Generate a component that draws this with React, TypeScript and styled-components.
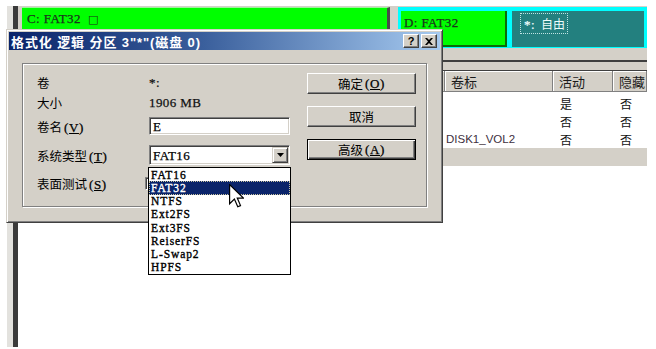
import React from 'react';
import styled, { createGlobalStyle } from 'styled-components';

const CJK = `"Noto Sans CJK SC", "Noto Sans", sans-serif`;
const UI = `"Liberation Sans", "Noto Sans CJK SC", sans-serif`;
const SERIF = `"Liberation Serif", "Noto Sans CJK SC", serif`;

const GlobalStyle = createGlobalStyle`
  html, body {
    margin: 0;
    padding: 0;
    background: #fff;
  }
  body {
    width: 656px;
    height: 349px;
    overflow: hidden;
  }
  * {
    box-sizing: border-box;
  }
`;

// SimSun-like latin: serif, evenly spaced, a bit heavy
const bitmapText = `
  font-family: ${SERIF};
  font-size: 13px;
  line-height: 13px;
  letter-spacing: 0.4px;
  -webkit-text-stroke: 0.25px currentColor;
`;

const Stage = styled.div`
  position: relative;
  width: 656px;
  height: 349px;
  overflow: hidden;
  background: #fff;
`;

/* ---------- partition window behind the dialog ---------- */

const Shell = styled.div`
  display: flex;
  width: 640px;
  height: 341px;
  margin: 6px 0 0 7px;
`;

const Gutter = styled.div`
  width: 6px;
  background: #e3e2de;
`;

const Rail = styled.div`
  width: 5px;
  background: #3b3b3b;
`;

const Main = styled.div`
  flex: 1;
  min-width: 0;
  display: flex;
  flex-direction: column;
`;

const MapStrip = styled.div`
  height: 54px;
  flex: none;
  display: flex;
  align-items: flex-start;
  padding-top: 1px;
  background: #d4d0c8;
`;

const CBox = styled.div`
  width: 368px;
  height: 41px;
  margin-left: 4px;
  padding: 4px 0 0 5px;
  background: #00ff00;
  border-top: 1px solid #9cf59c;
  border-right: 3px solid #4a4a4a;
  ${bitmapText}
  color: #1c321c;
`;

const Square = styled.span`
  margin-left: 7px;
  font: 11px "DejaVu Sans", sans-serif;
  -webkit-text-stroke: 0;
  letter-spacing: 0;
`;

const Selection = styled.div`
  flex: 1;
  height: 41px;
  margin-left: 8px;
  display: flex;
  gap: 5px;
  padding: 4px 3px 1px 3px;
  background: #00ffff;
`;

const DBox = styled.div`
  width: 106px;
  padding: 5px 0 0 3px;
  background: #00ff00;
  border-right: 2px solid #0b6a0b;
  border-bottom: 2px solid #0b6a0b;
  ${bitmapText}
  color: #1c321c;
`;

const FreeBox = styled.div`
  flex: 1;
  padding: 2px 0 0 8px;
  background: #23807f;
`;

const FocusText = styled.span`
  display: inline-block;
  padding: 1px 2px 1px 3px;
  border: 1px dotted #bfe3e3;
  color: #eefcfc;
  ${bitmapText}
`;

const FreeLabel = styled.span`
  margin-left: 6px;
  font: 12px ${CJK};
  letter-spacing: 0;
  -webkit-text-stroke: 0;
`;

const Splitter = styled.div`
  height: 10px;
  flex: none;
  background: #d4d0c8;
  border-top: 2px solid #3f3f3f;
`;

const ListFrame = styled.div`
  flex: 1;
  display: flex;
  flex-direction: column;
  background: #fff;
  border-top: 1px solid #404040;
`;

const COLUMNS = '427px 108px 60px 1fr';

const HeaderRow = styled.div`
  display: grid;
  grid-template-columns: ${COLUMNS};
  height: 21px;
  flex: none;
  background: #d4d0c8;
`;

const HeaderCell = styled.div`
  display: flex;
  align-items: center;
  padding-left: 6px;
  border-right: 1px solid #808080;
  border-bottom: 1px solid #808080;
  box-shadow: inset 1px 1px 0 #fff;
  font: 13px ${CJK};
  color: #1a1a1a;
  white-space: nowrap;
  overflow: hidden;
`;

const Rows = styled.div`
  padding-top: 2px;
`;

const Row = styled.div<{ $muted?: boolean }>`
  display: grid;
  grid-template-columns: ${COLUMNS};
  height: 18px;
  background: ${p => (p.$muted ? '#d4d0c8' : 'transparent')};
`;

const Cell = styled.div<{ $latin?: boolean }>`
  display: flex;
  align-items: center;
  padding-left: ${p => (p.$latin ? '1px' : '7px')};
  font: ${p => (p.$latin ? `11.5px ${UI}` : `12px ${CJK}`)};
  color: ${p => (p.$latin ? '#3e2f40' : '#111')};
  white-space: nowrap;
`;

/* ---------- dialog ---------- */

const Dialog = styled.div`
  position: absolute;
  left: 6px;
  top: 29px;
  width: 437px;
  height: 194px;
  display: flex;
  flex-direction: column;
  padding: 2px;
  background: #d4d0c8;
  border: 1px solid;
  border-color: #d4d0c8 #404040 #404040 #d4d0c8;
  box-shadow: inset 1px 1px 0 #fff, inset -1px -1px 0 #808080;
`;

const TitleBar = styled.div`
  height: 18px;
  flex: none;
  display: flex;
  align-items: center;
  padding: 0 3px 0 2px;
  background: linear-gradient(90deg, #0a246a 0%, #3a5f9c 45%, #a6caf0 100%);
`;

const TitleText = styled.div`
  flex: 1;
  color: #fff;
  font: bold 13px ${UI};
  letter-spacing: 0.9px;
  white-space: nowrap;
`;

const CaptionButton = styled.div`
  width: 16px;
  height: 14px;
  margin-left: 2px;
  display: flex;
  align-items: center;
  justify-content: center;
  background: #d4d0c8;
  border: 1px solid;
  border-color: #fff #404040 #404040 #fff;
  box-shadow: inset -1px -1px 0 #808080;
  font: bold 11px ${UI};
  color: #000;
`;

const DialogBody = styled.div`
  flex: 1;
  padding: 13px;
`;

const GroupBox = styled.div`
  height: 100%;
  display: flex;
  justify-content: space-between;
  padding: 9px 10px 0 14px;
  border: 1px solid #808080;
  box-shadow: inset 1px 1px 0 #fff, 1px 1px 0 #fff;
`;

const Form = styled.div`
  display: flex;
  flex-direction: column;
  padding-top: 1px;
`;

const FieldRow = styled.div<{ $h: number; $gap: number }>`
  display: flex;
  align-items: center;
  height: ${p => p.$h}px;
  margin-top: ${p => p.$gap}px;
`;

const Label = styled.div`
  width: 112px;
  font: 12.5px ${CJK};
  color: #000;
  white-space: nowrap;
`;

const Key = styled.span`
  ${bitmapText}
  letter-spacing: 0.6px;
  margin-left: 2px;
  u {
    text-underline-offset: 1px;
  }
`;

const Value = styled.div`
  ${bitmapText}
  color: #111;
`;

const Sunken = styled.div<{ $h: number }>`
  width: 141px;
  height: ${p => p.$h}px;
  display: flex;
  align-items: center;
  padding-left: 3px;
  background: #fff;
  border: 1px solid;
  border-color: #808080 #fff #fff #808080;
  box-shadow: inset 1px 1px 0 #404040, inset -1px -1px 0 #d4d0c8;
  ${bitmapText}
  color: #000;
`;

const ComboText = styled.span`
  flex: 1;
`;

const ArrowButton = styled.div`
  width: 16px;
  height: 16px;
  margin-right: 1px;
  display: flex;
  align-items: center;
  justify-content: center;
  background: #d4d0c8;
  border: 1px solid;
  border-color: #d4d0c8 #404040 #404040 #d4d0c8;
  box-shadow: inset 1px 1px 0 #fff, inset -1px -1px 0 #808080;
`;

const CheckPeek = styled.div`
  width: 13px;
  height: 13px;
  margin-left: -4px;
  background: #fff;
  border: 1px solid;
  border-color: #808080 #fff #fff #808080;
  box-shadow: inset 1px 1px 0 #404040;
`;

const ButtonColumn = styled.div`
  display: flex;
  flex-direction: column;
  gap: 12px;
`;

const PushButton = styled.div<{ $isDefault?: boolean }>`
  width: 109px;
  height: 21px;
  display: flex;
  align-items: center;
  justify-content: center;
  background: #d4d0c8;
  border: 1px solid;
  border-color: ${p => (p.$isDefault ? '#000' : '#fff #404040 #404040 #fff')};
  box-shadow: ${p =>
    p.$isDefault
      ? 'inset 1px 1px 0 #fff, inset -1px -1px 0 #404040, inset -2px -2px 0 #808080'
      : 'inset -1px -1px 0 #808080'};
  font: 12.5px ${CJK};
  color: #000;
`;

/* ---------- open drop-down list ---------- */

const DropList = styled.div`
  position: absolute;
  left: 148px;
  top: 167px;
  width: 143px;
  background: #fff;
  border: 1px solid #000;
`;

const DropItem = styled.div<{ $active?: boolean }>`
  height: 13.25px;
  display: flex;
  align-items: center;
  padding-left: 2px;
  overflow: hidden;
  ${bitmapText}
  font-size: 11.5px;
  line-height: 12px;
  letter-spacing: 0.9px;
  -webkit-text-stroke: 0.35px currentColor;
  color: ${p => (p.$active ? '#fff' : '#000')};
  background: ${p => (p.$active ? '#0a246a' : 'transparent')};
  outline: ${p => (p.$active ? '1px dotted #c8c4a0' : 'none')};
  outline-offset: -1px;
`;

const Pointer = styled.svg`
  position: absolute;
  left: 229px;
  top: 184px;
`;

const fileSystems = ['FAT16', 'FAT32', 'NTFS', 'Ext2FS', 'Ext3FS', 'ReiserFS', 'L-Swap2', 'HPFS'];

const rows = [
  { label: '', active: '是', hidden: '否' },
  { label: '', active: '否', hidden: '否' },
  { label: 'DISK1_VOL2', active: '否', hidden: '否' },
];

export default function App() {
  return (
    <Stage>
      <GlobalStyle />
      <Shell>
        <Gutter />
        <Rail />
        <Main>
          <MapStrip>
            <CBox>
              C: FAT32<Square>□</Square>
            </CBox>
            <Selection>
              <DBox>D: FAT32</DBox>
              <FreeBox>
                <FocusText>
                  *:<FreeLabel>自由</FreeLabel>
                </FocusText>
              </FreeBox>
            </Selection>
          </MapStrip>
          <Splitter />
          <ListFrame>
            <HeaderRow>
              <HeaderCell />
              <HeaderCell>卷标</HeaderCell>
              <HeaderCell>活动</HeaderCell>
              <HeaderCell>隐藏</HeaderCell>
            </HeaderRow>
            <Rows>
              {rows.map((r, i) => (
                <Row key={i}>
                  <Cell />
                  <Cell $latin>{r.label}</Cell>
                  <Cell>{r.active}</Cell>
                  <Cell>{r.hidden}</Cell>
                </Row>
              ))}
              <Row $muted />
            </Rows>
          </ListFrame>
        </Main>
      </Shell>

      <Dialog>
        <TitleBar>
          <TitleText>格式化 逻辑 分区 3"*"(磁盘 0)</TitleText>
          <CaptionButton>?</CaptionButton>
          <CaptionButton>
            <svg width="8" height="7" viewBox="0 0 8 7">
              <path d="M0 0h2l2 2 2-2h2L5 3.5 8 7H6L4 5 2 7H0l3-3.5z" fill="#000" />
            </svg>
          </CaptionButton>
        </TitleBar>
        <DialogBody>
          <GroupBox>
            <Form>
              <FieldRow $h={16} $gap={0}>
                <Label>卷</Label>
                <Value>*:</Value>
              </FieldRow>
              <FieldRow $h={16} $gap={4}>
                <Label>大小</Label>
                <Value>1906 MB</Value>
              </FieldRow>
              <FieldRow $h={18} $gap={7}>
                <Label>
                  卷名<Key>(<u>V</u>)</Key>
                </Label>
                <Sunken $h={18}>E</Sunken>
              </FieldRow>
              <FieldRow $h={20} $gap={10}>
                <Label>
                  系统类型<Key>(<u>T</u>)</Key>
                </Label>
                <Sunken $h={20}>
                  <ComboText>FAT16</ComboText>
                  <ArrowButton>
                    <svg width="7" height="4" viewBox="0 0 7 4">
                      <path d="M0 0h7L3.5 4z" fill="#000" />
                    </svg>
                  </ArrowButton>
                </Sunken>
              </FieldRow>
              <FieldRow $h={16} $gap={10}>
                <Label>
                  表面测试<Key>(<u>S</u>)</Key>
                </Label>
                <CheckPeek />
              </FieldRow>
            </Form>
            <ButtonColumn>
              <PushButton>
                确定<Key>(<u>O</u>)</Key>
              </PushButton>
              <PushButton>取消</PushButton>
              <PushButton $isDefault>
                高级<Key>(<u>A</u>)</Key>
              </PushButton>
            </ButtonColumn>
          </GroupBox>
        </DialogBody>
      </Dialog>

      <DropList>
        {fileSystems.map(fs => (
          <DropItem key={fs} $active={fs === 'FAT32'}>
            {fs}
          </DropItem>
        ))}
      </DropList>

      <Pointer width="15" height="24" viewBox="0 0 12.5 20">
        <path
          d="M0.5 0.5 L0.5 16.5 L4.5 12.6 L7.3 19 L9.6 18 L6.9 11.7 L12 11.7 Z"
          fill="#fff"
          stroke="#000"
          strokeWidth="1"
          strokeLinejoin="miter"
        />
      </Pointer>
    </Stage>
  );
}
